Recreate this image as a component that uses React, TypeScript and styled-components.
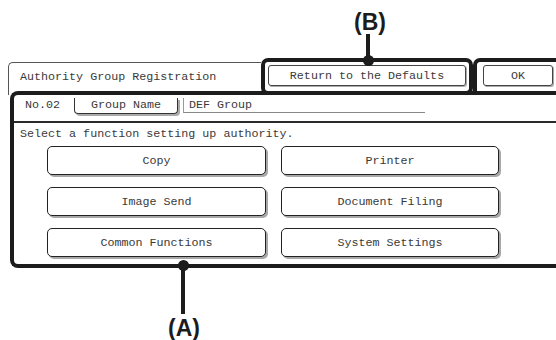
import React from 'react';
import styled, { createGlobalStyle } from 'styled-components';

const GlobalStyle = createGlobalStyle`
  html, body {
    margin: 0;
    padding: 0;
    background: #ffffff;
  }
`;

const mono = `'Liberation Mono', 'Courier New', monospace`;

const Page = styled.div`
  position: relative;
  width: 556px;
  height: 340px;
  overflow: hidden;
  padding-top: 58px;
  box-sizing: border-box;
  font-family: ${mono};
  font-size: 11.7px;
  color: #3a3a3a;
`;

const Screen = styled.div`
  margin-left: 8px;
  display: flex;
  flex-direction: column;
`;

const HeaderRow = styled.div`
  display: flex;
  height: 37px;
  margin-bottom: -4px;
`;

const TitleTab = styled.div`
  width: 253px;
  flex-shrink: 0;
  box-sizing: border-box;
  margin-top: 4px;
  padding: 0 0 4px 11px;
  display: flex;
  align-items: center;
  border-top: 1px solid #555;
  border-left: 1px solid #555;
  border-top-left-radius: 5px;
  white-space: nowrap;
`;

const CalloutFrame = styled.div`
  width: 212px;
  flex-shrink: 0;
  box-sizing: border-box;
  border: 4px solid #1c1c1c;
  border-radius: 7px;
  padding: 3px 3px 0 3px;
  display: flex;
  align-items: flex-start;
`;

const OkFrame = styled.div`
  flex: 1;
  border-top: 4px solid #1c1c1c;
  border-left: 4px solid #1c1c1c;
  border-top-left-radius: 7px;
  padding: 3px 0 0 6px;
  display: flex;
  align-items: flex-start;
`;

const SmallButton = styled.div<{ width?: string }>`
  width: ${({ width }) => width ? width : '100%'};
  height: 21px;
  box-sizing: border-box;
  border: 1px solid #444;
  border-radius: 3px;
  box-shadow: 1px 1px 0 #aaa;
  display: flex;
  align-items: center;
  justify-content: center;
  white-space: nowrap;
`;

const AreaFrame = styled.div`
  margin-left: 2px;
  height: 177px;
  box-sizing: border-box;
  border: 4px solid #1c1c1c;
  border-right: none;
  border-radius: 8px 0 0 8px;
  display: flex;
  flex-direction: column;
`;

const InfoRow = styled.div`
  height: 26px;
  display: flex;
  align-items: stretch;
  padding-left: 11px;
`;

const NoLabel = styled.div`
  width: 49px;
  display: flex;
  align-items: center;
  padding-bottom: 6px;
`;

const GroupTab = styled.div`
  width: 104px;
  margin: 3px 0 7px;
  box-sizing: border-box;
  border: 1.5px solid #333;
  border-top: none;
  border-radius: 0 0 4px 4px;
  box-shadow: 2px 2px 0 #aaa;
  display: flex;
  align-items: center;
  justify-content: center;
  padding-bottom: 2px;
`;

const NameField = styled.div`
  width: 242px;
  margin: 3px 0 8px 5px;
  padding-left: 5px;
  box-sizing: border-box;
  border-left: 1px solid #999;
  border-bottom: 1px solid #888;
  display: flex;
  align-items: center;
`;

const Separator = styled.div`
  height: 2px;
  background: #2a2a2a;
`;

const Prompt = styled.div`
  height: 23px;
  line-height: 23px;
  padding-left: 6px;
  white-space: nowrap;
`;

const FunctionGrid = styled.div`
  display: grid;
  grid-template-columns: 219px 218px;
  grid-auto-rows: 29px;
  column-gap: 15px;
  row-gap: 12px;
  padding-left: 33px;
`;

const FunctionButton = styled.div`
  box-sizing: border-box;
  border: 1.5px solid #222;
  border-radius: 5px;
  box-shadow: 2px 2px 0 #a8a8a8;
  background: #fff;
  display: flex;
  align-items: center;
  justify-content: center;
`;

const CalloutLabel = styled.div<{ left: number; top: number }>`
  position: absolute;
  left: ${({ left }) => left}px;
  top: ${({ top }) => top}px;
  width: 50px;
  margin-left: -25px;
  text-align: center;
  font-family: 'Liberation Sans', Arial, sans-serif;
  font-weight: 700;
  font-size: 23px;
  line-height: 24px;
  color: #1c1c1c;
`;

const Stem = styled.div<{ left: number; top: number; length: number }>`
  position: absolute;
  left: ${({ left }) => left - 2}px;
  top: ${({ top }) => top}px;
  width: 4px;
  height: ${({ length }) => length}px;
  background: #1c1c1c;
`;

const Dot = styled.div<{ left: number; top: number }>`
  position: absolute;
  left: ${({ left }) => left - 5.5}px;
  top: ${({ top }) => top - 5.5}px;
  width: 11px;
  height: 11px;
  border-radius: 50%;
  background: #1c1c1c;
`;

const functions = [
  'Copy', 'Printer',
  'Image Send', 'Document Filing',
  'Common Functions', 'System Settings',
];

const App = () => {
  return (
    <>
      <GlobalStyle />
      <Page>
        <Screen>
          <HeaderRow>
            <TitleTab>Authority Group Registration</TitleTab>
            <CalloutFrame>
              <SmallButton>Return to the Defaults</SmallButton>
            </CalloutFrame>
            <OkFrame>
              <SmallButton width="70px">OK</SmallButton>
            </OkFrame>
          </HeaderRow>
          <AreaFrame>
            <InfoRow>
              <NoLabel>No.02</NoLabel>
              <GroupTab>Group Name</GroupTab>
              <NameField>DEF Group</NameField>
            </InfoRow>
            <Separator />
            <Prompt>Select a function setting up authority.</Prompt>
            <FunctionGrid>
              {functions.map((name) => (
                <FunctionButton key={name}>{name}</FunctionButton>
              ))}
            </FunctionGrid>
          </AreaFrame>
        </Screen>

        <CalloutLabel left={370} top={10}>(B)</CalloutLabel>
        <Stem left={368} top={34} length={25} />
        <Dot left={368} top={60} />

        <Dot left={183} top={265} />
        <Stem left={183} top={266} length={48} />
        <CalloutLabel left={184} top={316}>(A)</CalloutLabel>
      </Page>
    </>
  );
};

export default App;
